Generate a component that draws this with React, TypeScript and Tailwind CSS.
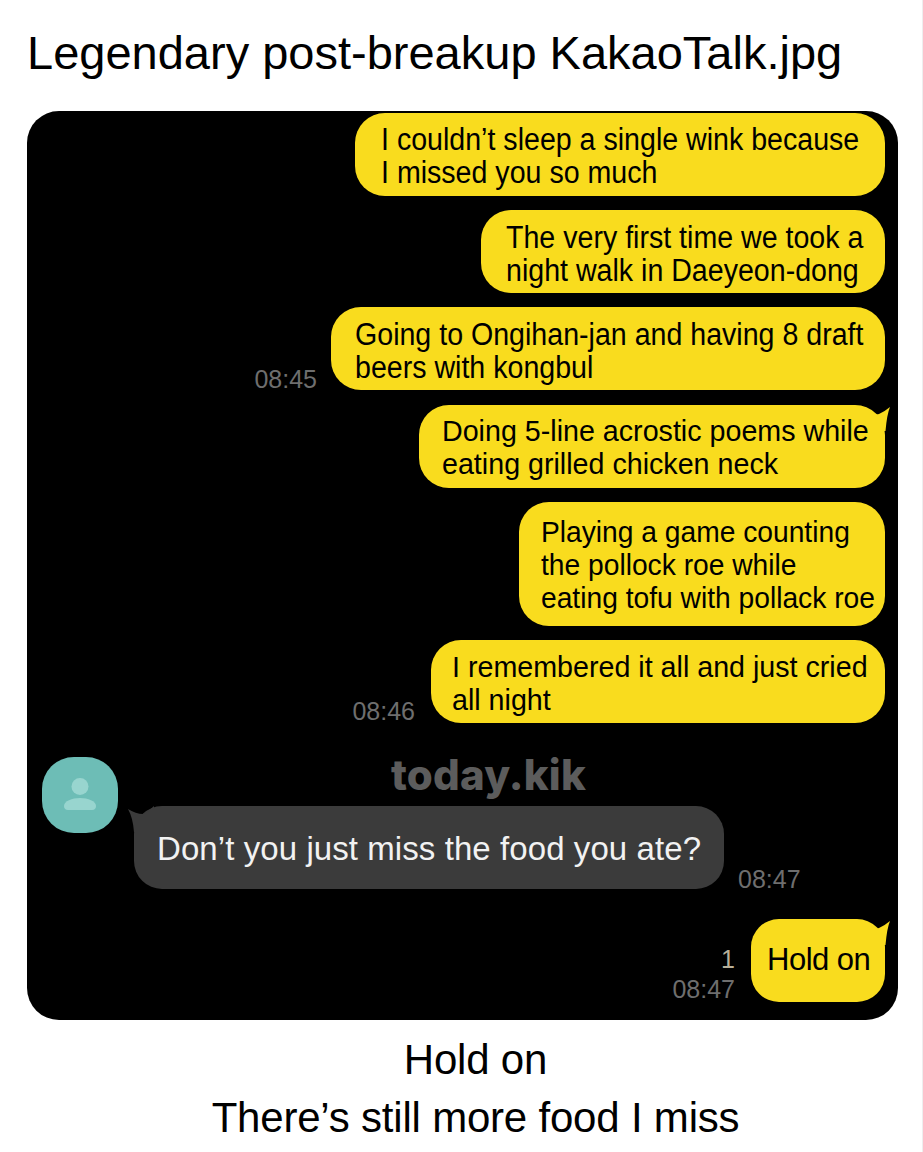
import React from 'react';

const Time = ({ children, className = '' }: { children: React.ReactNode; className?: string }) => (
  <span className={`text-[25px] leading-[22px] text-[#6e6e6e] ${className}`}>{children}</span>
);

const Tail = () => (
  <svg className="absolute right-[-5px] top-0" width="24" height="26" viewBox="0 0 24 26">
    <path d="M4 7 Q9 10 13 9 Q18 7 24 2 Q21 9 19.5 26 L4 26 Z" fill="#f9dc1e" />
  </svg>
);

interface BubbleProps {
  lines: string[];
  // width, height and padding differ per bubble
  box: string;
  // the text in the picture is squeezed sideways, by a different amount per group
  squeeze: string;
  tail?: boolean;
}

const Bubble = ({ lines, box, squeeze, tail }: BubbleProps) => (
  <div className={`relative rounded-[30px] bg-[#f9dc1e] leading-[33px] text-black ${box}`}>
    {tail && <Tail />}
    <div className={`relative origin-left ${squeeze}`}>
      {lines.map((l) => (
        <div key={l} className="whitespace-nowrap">{l}</div>
      ))}
    </div>
  </div>
);

export default function App() {
  return (
    <div className="h-[1152px] w-[923px] overflow-hidden border-r border-[#eeeeee] bg-white font-['Liberation_Sans',Arial,sans-serif] text-black">
      <h1 className="pl-[27px] pt-[23px] text-[47px] font-normal leading-[60px]">
        Legendary post-breakup KakaoTalk.jpg
      </h1>

      {/* chat panel */}
      <div className="relative ml-[27px] mt-[28px] flex h-[909px] w-[871px] flex-col rounded-[32px] bg-black pr-[13px] pt-[2px]">
        <div className="flex flex-col items-end gap-[14px]">
          <Bubble
            box="h-[83px] w-[530px] pl-[26px] pt-[10px] text-[31px]"
            squeeze="scale-x-[0.922]"
            lines={['I couldn’t sleep a single wink because', 'I missed you so much']}
          />
          <Bubble
            box="h-[83px] w-[404px] pl-[25px] pt-[11px] text-[31px]"
            squeeze="scale-x-[0.922]"
            lines={['The very first time we took a', 'night walk in Daeyeon-dong']}
          />
          <div className="flex items-end gap-[14px]">
            <Time>08:45</Time>
            <Bubble
              box="h-[83px] w-[554px] pl-[24px] pt-[11px] text-[31px]"
              squeeze="scale-x-[0.922]"
              lines={['Going to Ongihan-jan and having 8 draft', 'beers with kongbul']}
            />
          </div>
          <Bubble
            box="mt-[1px] h-[83px] w-[466px] pl-[23px] pt-[9px] text-[30px]"
            squeeze="scale-x-[0.955]"
            tail
            lines={['Doing 5-line acrostic poems while', 'eating grilled chicken neck']}
          />
          <Bubble
            box="h-[124px] w-[366px] pl-[22px] pt-[13px] text-[30px]"
            squeeze="scale-x-[0.94]"
            lines={['Playing a game counting', 'the pollock roe while', 'eating tofu with pollack roe']}
          />
          <div className="flex items-end gap-[16px]">
            <Time className="pb-[1px]">08:46</Time>
            <Bubble
              box="h-[83px] w-[454px] pl-[21px] pt-[10px] text-[30px]"
              squeeze="scale-x-[0.955]"
              lines={['I remembered it all and just cried', 'all night']}
            />
          </div>
        </div>

        {/* watermark */}
        <div className="absolute left-[364px] top-[639px] font-['Inter',sans-serif] text-[42px] font-extrabold leading-[50px] tracking-[0.2px] text-[#5c5c5c]">
          today.kik
        </div>

        {/* incoming message */}
        <div className="mt-[34px] flex items-start pl-[15px]">
          <div className="flex h-[76px] w-[76px] items-center justify-center rounded-[32px] bg-[#6dbdb6]">
            <svg width="34" height="34" viewBox="0 0 34 34">
              <circle cx="17" cy="8.5" r="8.5" fill="#98d5cf" />
              <path d="M1 28 C1 23 9 20 17 20 C25 20 33 23 33 28 C33 30 32 32 29 32 L5 32 C2 32 1 30 1 28 Z" fill="#98d5cf" />
            </svg>
          </div>
          <div className="relative ml-[16px] mt-[49px] flex h-[83px] w-[590px] items-center rounded-[28px] bg-[#3b3b3b] pl-[23px] pt-[2px] text-[33px] tracking-[0.08px] text-[#f2f2f2]">
            <svg className="absolute left-[-6px] top-0" width="26" height="26" viewBox="0 0 26 26">
              <path d="M0 3 Q8 8 15 8 Q20 6 26 0 L26 26 L6 26 Q5 12 0 3 Z" fill="#3b3b3b" />
            </svg>
            <span className="relative">Don’t you just miss the food you ate?</span>
          </div>
          <Time className="ml-[14px] mt-[111px]">08:47</Time>
        </div>

        {/* outgoing message */}
        <div className="mt-[29px] flex items-end justify-end gap-[16px]">
          <div className="flex flex-col items-end pb-[2px]">
            <span className="text-[25px] leading-[22px] text-[#b8b09a]">1</span>
            <Time className="mt-[8px]">08:47</Time>
          </div>
          <div className="relative flex h-[83px] w-[134px] items-center rounded-[28px] bg-[#f9dc1e] pl-[16px] text-[31px] tracking-[-0.5px]">
            <Tail />
            <span className="relative">Hold on</span>
          </div>
        </div>
      </div>

      <div className="mt-[11px] w-[951px] text-center text-[42px] leading-[58px] tracking-[-0.2px]">
        <div>Hold on</div>
        <div>There’s still more food I miss</div>
      </div>
    </div>
  );
}
